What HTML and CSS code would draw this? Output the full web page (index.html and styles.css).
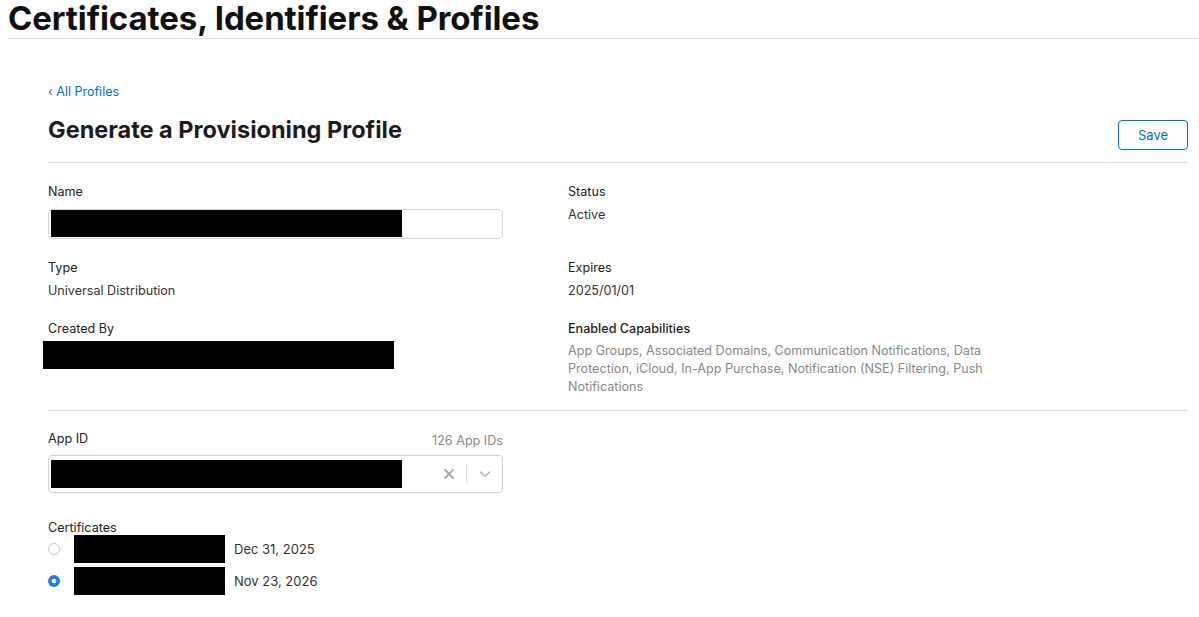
FILE: index.html
```html
<!DOCTYPE html>
<html lang="en">
<head>
<meta charset="utf-8">
<title>Certificates, Identifiers &amp; Profiles</title>
<link rel="stylesheet" href="styles.css">
</head>
<body>
<header class="site-header">
  <h1 class="site-title">Certificates, Identifiers &amp; Profiles</h1>
</header>
<main class="main">
  <a class="back-link" href="#">‹ All Profiles</a>
  <div class="heading-row">
    <h2 class="page-heading">Generate a Provisioning Profile</h2>
    <button class="btn-save" type="button">Save</button>
  </div>

  <section class="details">
    <div class="field">
      <div class="label">Name</div>
      <div class="text-input"><div class="redact redact-name"></div></div>
    </div>
    <div class="field">
      <div class="label">Status</div>
      <div class="value">Active</div>
    </div>
    <div class="field">
      <div class="label">Type</div>
      <div class="value">Universal Distribution</div>
    </div>
    <div class="field">
      <div class="label">Expires</div>
      <div class="value">2025/01/01</div>
    </div>
    <div class="field">
      <div class="label">Created By</div>
      <div class="redact redact-creator"></div>
    </div>
    <div class="field">
      <div class="label label-strong">Enabled Capabilities</div>
      <div class="value value-muted capabilities">App Groups, Associated Domains, Communication Notifications, Data Protection, iCloud, In-App Purchase, Notification (NSE) Filtering, Push Notifications</div>
    </div>
  </section>

  <section class="selection">
    <div class="appid-field">
      <div class="label-row">
        <span class="label">App ID</span>
        <span class="count">126 App IDs</span>
      </div>
      <div class="select">
        <div class="redact redact-select"></div>
        <div class="select-controls">
          <svg class="icon-clear" width="12" height="12" viewBox="0 0 12 12"><path d="M2 2 L10 10 M10 2 L2 10" stroke="#a6a6a6" stroke-width="1.8" stroke-linecap="round"/></svg>
          <span class="select-sep"></span>
          <svg class="icon-chevron" width="14" height="14" viewBox="0 0 14 14"><path d="M2.5 5 L7 9.2 L11.5 5" fill="none" stroke="#b3b3b3" stroke-width="1.5" stroke-linecap="round" stroke-linejoin="round"/></svg>
        </div>
      </div>
    </div>

    <div class="cert-field">
      <div class="label label-cert">Certificates</div>
      <div class="cert-row cert-row-first">
        <span class="radio"></span>
        <div class="redact redact-cert"></div>
        <span class="cert-date">Dec 31, 2025</span>
      </div>
      <div class="cert-row">
        <span class="radio radio-checked"></span>
        <div class="redact redact-cert"></div>
        <span class="cert-date">Nov 23, 2026</span>
      </div>
    </div>
  </section>
</main>
</body>
</html>
```

FILE: styles.css
```css
* { box-sizing: border-box; }

html, body {
  margin: 0;
  padding: 0;
  background: #fff;
}

body {
  font-family: Inter, "Noto Sans", "Liberation Sans", sans-serif;
  font-size: 12.6px;
  line-height: 18px;
  color: #333;
  overflow: hidden;
}

.site-header {
  margin-left: 8px;
  border-bottom: 1px solid #e3e3e3;
  padding-bottom: 2px;
}

.site-title {
  margin: 0;
  font-size: 33px;
  line-height: 36px;
  font-weight: 700;
  color: #111;
  letter-spacing: -0.1px;
}

.main {
  padding: 44px 11px 0 48px;
}

.back-link {
  display: block;
  color: #0070c9;
  text-decoration: none;
  font-size: 12.5px;
}

.heading-row {
  display: flex;
  justify-content: space-between;
  align-items: flex-start;
  margin-top: 15px;
  padding-bottom: 12px;
  border-bottom: 1px solid #ddd;
}

.page-heading {
  margin: 0;
  font-size: 23.5px;
  line-height: 28px;
  font-weight: 700;
  color: #1d1d1f;
}

.btn-save {
  margin-top: 4px;
  width: 70px;
  height: 30px;
  border: 1px solid #0070c9;
  border-radius: 4px;
  background: #fff;
  color: #0070c9;
  font-family: inherit;
  font-size: 13px;
  padding: 0;
}

.details {
  display: grid;
  grid-template-columns: 520px 1fr;
  row-gap: 20px;
  padding: 20px 0 14px;
  border-bottom: 1px solid #ddd;
}

.field {
  display: flex;
  flex-direction: column;
}

.label {
  color: #222;
  font-weight: 400;
}

.label-strong {
  color: #1d1d1f;
  font-weight: 500;
}

.value {
  margin-top: 5px;
  color: #333;
}

.value-muted {
  color: #888;
  margin-top: 4px;
}

.capabilities {
  max-width: 430px;
}

.text-input {
  margin-top: 8px;
  width: 455px;
  height: 30px;
  border: 1px solid #d6d6d6;
  border-radius: 4px;
  padding: 0 2px;
}

.redact {
  background: #000;
}

.redact-name {
  width: 351px;
  height: 27px;
}

.redact-creator {
  margin-top: 3px;
  margin-left: -5px;
  width: 351px;
  height: 28px;
}

.selection {
  padding-top: 19px;
}

.appid-field {
  width: 455px;
}

.label-row {
  display: flex;
  justify-content: space-between;
  align-items: baseline;
  height: 18px;
}

.count {
  color: #888;
  font-size: 12.6px;
  position: relative;
  top: 2px;
}

.select {
  margin-top: 7px;
  height: 38px;
  border: 1px solid #d2d2d2;
  border-radius: 4px;
  display: flex;
  align-items: center;
  padding: 0 2px;
}

.redact-select {
  width: 351px;
  height: 28px;
}

.select-controls {
  margin-left: auto;
  display: flex;
  align-items: center;
}

.icon-clear {
  display: block;
  margin-right: 11px;
}

.select-sep {
  width: 1px;
  height: 18px;
  background: #ddd;
}

.icon-chevron {
  display: block;
  margin: 0 8px 0 11px;
}

.cert-field {
  margin-top: 27px;
}

.label-cert {
  line-height: 16px;
}

.cert-row {
  display: flex;
  align-items: center;
  height: 32px;
}

.cert-row-first {
  margin-top: -3px;
}

.radio {
  width: 12px;
  height: 12px;
  border-radius: 50%;
  border: 1px solid #c8c8c8;
  background: #fff;
  flex: none;
}

.radio-checked {
  border: none;
  background: radial-gradient(circle, #fff 0 2px, #1f7cf5 2.6px);
}

.redact-cert {
  margin-left: 14px;
  width: 151px;
  height: 28px;
}

.cert-date {
  margin-left: 9px;
  font-size: 13px;
  color: #333;
}
```
